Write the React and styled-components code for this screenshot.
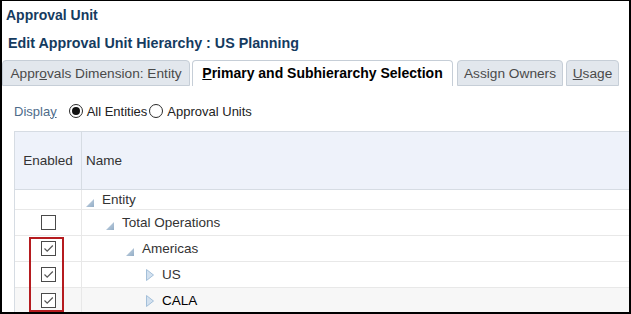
import React from 'react';
import styled, { createGlobalStyle } from 'styled-components';

const GlobalStyle = createGlobalStyle`
  html, body {
    margin: 0;
    padding: 0;
    background: #ffffff;
  }
  body {
    font-family: "Liberation Sans", Arial, sans-serif;
  }
`;

const Frame = styled.div`
  position: relative;
  width: 631px;
  height: 314px;
  box-sizing: border-box;
  border: 2px solid #000;
  border-top-width: 1px;
  overflow: hidden;
  background: #fff;
`;

const Title = styled.div`
  padding: 6px 0 0 4px;
  font-size: 14px;
  line-height: 16px;
  font-weight: bold;
  color: #153b5f;
`;

const SubTitle = styled.div`
  margin-top: 12px;
  padding-left: 6px;
  font-size: 14.3px;
  line-height: 16px;
  font-weight: bold;
  color: #153b5f;
`;

const TabBar = styled.div`
  margin-top: 9px;
  display: flex;
  align-items: flex-end;
`;

const Tab = styled.div`
  box-sizing: border-box;
  width: ${(p) => p.$w}px;
  height: 26px;
  margin-left: ${(p) => p.$gap || 0}px;
  border: 1px solid #c6ced7;
  border-bottom: ${(p) => (p.$active ? 'none' : '1px solid #c6ced7')};
  border-radius: 4px 4px 0 0;
  background: ${(p) => (p.$active ? '#ffffff' : '#e2e7ed')};
  color: ${(p) => (p.$active ? '#000' : '#4a4a4a')};
  font-size: ${(p) => (p.$active ? '14px' : '13.7px')};
  font-weight: ${(p) => (p.$active ? 'bold' : 'normal')};
  line-height: 25px;
  text-align: center;
  white-space: nowrap;

  u {
    text-decoration: underline;
    text-underline-offset: 1px;
  }
`;

const DisplayRow = styled.div`
  display: flex;
  align-items: center;
  padding: 16px 0 0 12px;
  height: 18px;
  margin-bottom: 11px;
  font-size: 13px;
  color: #222;
`;

const DisplayLabel = styled.span`
  color: #4e6b8a;
  margin-right: 12px;

  u {
    text-underline-offset: 1px;
  }
`;

const Radio = styled.span`
  box-sizing: border-box;
  width: 14px;
  height: 14px;
  border: 1px solid #2a2a2a;
  border-radius: 50%;
  display: inline-flex;
  align-items: center;
  justify-content: center;
  margin: 0 4px 0 ${(p) => p.$ml || 0}px;

  &::after {
    content: '';
    width: 8px;
    height: 8px;
    border-radius: 50%;
    background: ${(p) => (p.$checked ? '#111' : 'transparent')};
  }
`;

const Table = styled.div`
  position: relative;
  margin-left: 12px;
  border-left: 1px solid #d6dce3;
  border-top: 1px solid #d6dce3;
`;

const HeaderRow = styled.div`
  display: grid;
  grid-template-columns: 67px 1fr;
  height: 57px;
  background: #eef2fa;
  border-bottom: 1px solid #d6dce3;
  font-size: 13.5px;
  color: #333;
`;

const HeadCell = styled.div`
  display: flex;
  align-items: center;
  justify-content: ${(p) => (p.$center ? 'center' : 'flex-start')};
  padding-left: ${(p) => (p.$center ? 0 : 4)}px;
  border-right: ${(p) => (p.$divider ? '1px solid #d6dce3' : 'none')};
`;

const Row = styled.div`
  box-sizing: border-box;
  display: grid;
  grid-template-columns: 67px 1fr;
  height: ${(p) => p.$h}px;
  border-bottom: 1px solid #e8e8e8;
  background: ${(p) => (p.$selected ? '#f7f7f7' : '#fff')};
  font-size: 13.5px;
  color: ${(p) => (p.$selected ? '#000' : '#333')};
`;

const CheckCell = styled.div`
  display: flex;
  align-items: center;
  justify-content: center;
  border-right: 1px solid #e8e8e8;
`;

const Box = styled.span`
  box-sizing: border-box;
  width: 15px;
  height: 15px;
  border: 1px solid #4a4a4a;
  background: #fff;
  display: flex;
  align-items: center;
  justify-content: center;
`;

const NameCell = styled.div`
  display: flex;
  align-items: center;
  padding-left: ${(p) => 4 + p.$level * 20}px;
  white-space: nowrap;
`;

const Twisty = styled.span`
  width: 16px;
  height: 14px;
  display: flex;
  align-items: ${(p) => (p.$open ? 'flex-end' : 'center')};
  flex-shrink: 0;
`;

const Highlight = styled.div`
  position: absolute;
  left: 14px;
  top: 105px;
  width: 35px;
  height: 75px;
  box-sizing: border-box;
  border: 2px solid #b51b1f;
  pointer-events: none;
`;

const OpenIcon = () => (
  <svg width="8" height="8" viewBox="0 0 8 8">
    <defs>
      <linearGradient id="tg" x1="0" y1="0" x2="1" y2="1">
        <stop offset="0" stopColor="#c9d7e5" />
        <stop offset="1" stopColor="#93adc6" />
      </linearGradient>
    </defs>
    <polygon points="8,0 8,8 0,8" fill="url(#tg)" />
  </svg>
);

const ClosedIcon = () => (
  <svg width="8" height="12" viewBox="0 0 8 12">
    <polygon points="0.5,0.5 7.5,6 0.5,11.5" fill="#d3e1ef" stroke="#a3bfd9" strokeWidth="1" />
  </svg>
);

const Check = () => (
  <svg width="11" height="9" viewBox="0 0 11 9">
    <path d="M1.5 4.5 L4.2 7.2 L9.8 1.5" fill="none" stroke="#555" strokeWidth="1.2" />
  </svg>
);

const rows = [
  { name: 'Entity', level: 0, open: true, h: 20, box: false },
  { name: 'Total Operations', level: 1, open: true, h: 26, box: true, checked: false },
  { name: 'Americas', level: 2, open: true, h: 26, box: true, checked: true },
  { name: 'US', level: 3, open: false, h: 26, box: true, checked: true },
  { name: 'CALA', level: 3, open: false, h: 26, box: true, checked: true, selected: true },
];

export default function App() {
  return (
    <>
      <GlobalStyle />
      <Frame>
        <Title>Approval Unit</Title>
        <SubTitle>Edit Approval Unit Hierarchy : US Planning</SubTitle>
        <TabBar>
          <Tab $w={188}>Appr<u>o</u>vals Dimension: Entity</Tab>
          <Tab $w={261} $gap={2} $active><u>P</u>rimary and Subhierarchy Selection</Tab>
          <Tab $w={106} $gap={4}>Assign Owners</Tab>
          <Tab $w={53} $gap={3}><u>U</u>sage</Tab>
        </TabBar>
        <DisplayRow>
          <DisplayLabel>Displa<u>y</u></DisplayLabel>
          <Radio $checked />
          <span>All Entities</span>
          <Radio $ml={2} />
          <span>Approval Units</span>
        </DisplayRow>
        <Table>
          <HeaderRow>
            <HeadCell $center $divider>Enabled</HeadCell>
            <HeadCell>Name</HeadCell>
          </HeaderRow>
          {rows.map((r) => (
            <Row key={r.name} $h={r.h} $selected={r.selected}>
              <CheckCell>{r.box && <Box>{r.checked && <Check />}</Box>}</CheckCell>
              <NameCell $level={r.level}>
                <Twisty $open={r.open}>{r.open ? <OpenIcon /> : <ClosedIcon />}</Twisty>
                {r.name}
              </NameCell>
            </Row>
          ))}
          <Highlight />
        </Table>
      </Frame>
    </>
  );
}
